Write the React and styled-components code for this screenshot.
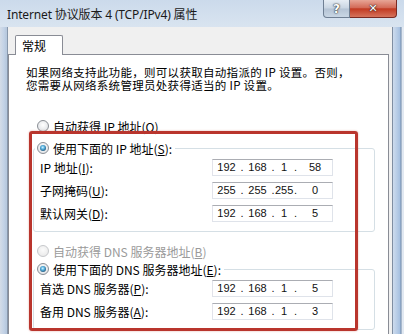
import styled, { createGlobalStyle } from "styled-components";

const GlobalStyle = createGlobalStyle`
  html, body {
    margin: 0;
    padding: 0;
    background: #d6e1ee;
  }
  body {
    font-family: "Noto Sans CJK SC", "Noto Sans", sans-serif;
    font-size: 12px;
    color: #000;
  }
`;

const Window = styled.div`
  position: relative;
  width: 404px;
  height: 334px;
  overflow: hidden;
  display: flex;
  flex-direction: column;
  background: linear-gradient(180deg, #cbdaeb 0, #d9e4f0 27px, #c9d8ea 100%);
`;

const TitleBar = styled.div`
  height: 27px;
  flex: none;
  display: flex;
  align-items: flex-start;
  padding-left: 7px;
`;

const Title = styled.div`
  flex: 1;
  padding-top: 6px;
  line-height: 18px;
  font-size: 12px;
  color: #1a1a1a;
  font-family: "Noto Sans", "Noto Sans CJK SC", sans-serif;
  letter-spacing: -0.15px;
`;

const Caption = styled.div`
  display: flex;
  margin-right: 7px;
`;

const CapButton = styled.div`
  height: 18px;
  box-sizing: border-box;
  display: grid;
  place-items: center;
  border: 1px solid ${(p) => (p.$close ? "#7a2a22" : "#6f7f93")};
  border-top: none;
  font-family: "DejaVu Sans", sans-serif;
  font-weight: bold;
  color: #fff;
  text-shadow: 0 0 2px #2a2a2a, 0 0 1px #000;
  width: ${(p) => (p.$close ? "47px" : "27px")};
  border-radius: ${(p) => (p.$close ? "0 0 4px 0" : "0 0 0 4px")};
  border-left: ${(p) => (p.$close ? "none" : undefined)};
  font-size: ${(p) => (p.$close ? "11px" : "12px")};
  background: ${(p) =>
    p.$close
      ? "linear-gradient(180deg, #e7a596 0, #d36b58 45%, #c23a22 52%, #d5735c 100%)"
      : "linear-gradient(180deg, #e6edf4 0, #c9d5e2 48%, #b4c3d4 52%, #c9d6e4 100%)"};
`;

const Middle = styled.div`
  flex: 1;
  display: flex;
  min-height: 0;
`;

const LeftFrame = styled.div`
  width: 7px;
  flex: none;
  background: linear-gradient(90deg, #d4dce7 0, #c2d2e6 4px, #b8c9de 6px);
  border-right: 1px solid #8797ab;
`;

const RightFrame = styled.div`
  width: 11px;
  flex: none;
  border-left: 1px solid #7f8ea2;
  background: linear-gradient(90deg, #cddbed 0, #b7cce6 4px, #a5bfe0 7px, #6f88a6 8px, #e2e9f2 9px);
`;

const Body = styled.div`
  flex: 1;
  display: flex;
  flex-direction: column;
  background: #f0f0f0;
  padding-right: 3px;
`;

const TabStrip = styled.div`
  height: 27px;
  flex: none;
  display: flex;
  align-items: flex-end;
  padding-left: 7px;
`;

const Tab = styled.div`
  position: relative;
  z-index: 1;
  width: 48px;
  height: 20px;
  box-sizing: border-box;
  margin-bottom: -1px;
  padding-left: 6px;
  line-height: 19px;
  font-size: 12px;
  background: #fff;
  border: 1px solid #898c95;
  border-bottom: none;
  border-radius: 2px 2px 0 0;
`;

const Panel = styled.div`
  flex: 1;
  background: #fff;
  border: 1px solid #898c95;
  border-bottom: none;
  padding: 11px 0 0 17px;
  display: flex;
  flex-direction: column;
  align-items: flex-start;
`;

const Desc = styled.p`
  margin: 0;
  line-height: 13px;
  font-size: 11.5px;
  letter-spacing: 0.3px;
  white-space: nowrap;
`;

const RadioRow = styled.div`
  display: flex;
  align-items: center;
  gap: 4px;
  height: 16px;
  margin-left: 11px;
  margin-top: ${(p) => p.$top}px;
  color: ${(p) => (p.$disabled ? "#9a9a9a" : "#000")};
  white-space: nowrap;
`;

const Radio = styled.span`
  width: 12px;
  height: 12px;
  box-sizing: border-box;
  flex: none;
  border-radius: 50%;
  border: 1px solid ${(p) => (p.$disabled ? "#c6c8cb" : "#8a8e95")};
  background: ${(p) =>
    p.$disabled
      ? "radial-gradient(circle at 50% 40%, #fbfbfb, #e6e6e6)"
      : "radial-gradient(circle at 50% 40%, #ffffff, #d9dce0)"};
  display: grid;
  place-items: center;

  &::after {
    content: "";
    display: ${(p) => (p.$checked ? "block" : "none")};
    width: 6px;
    height: 6px;
    border-radius: 50%;
    background: radial-gradient(circle at 45% 40%, #d8f3ff 0, #56b2e0 35%, #1f4f72 80%);
  }
`;

const Group = styled.fieldset`
  margin: ${(p) => p.$top}px 0 0 7px;
  width: 342px;
  box-sizing: border-box;
  padding: 3px 0 9px 6px;
  border: 1px solid #d5dfe5;
  border-radius: 3px;
  display: flex;
  flex-direction: column;
  gap: 6px;
  min-width: 0;
`;

const Legend = styled.legend`
  display: flex;
  align-items: center;
  gap: 4px;
  height: 16px;
  padding: 0 3px 0 2px;
  margin-left: -5px;
  white-space: nowrap;
`;

const Row = styled.div`
  display: flex;
  align-items: center;
  height: 17px;
`;

const Label = styled.span`
  width: 172px;
  flex: none;
  line-height: 17px;
  white-space: nowrap;
`;

const IpField = styled.div`
  width: 121px;
  height: 17px;
  box-sizing: border-box;
  border: 1px solid #dfe3ea;
  border-top-color: #abadb3;
  border-left-color: #e2e3ea;
  background: #fff;
  display: grid;
  grid-template-columns: 27px 4px 27px 4px 18px 5px 1fr;
  align-items: center;
  font-family: "Liberation Sans", Arial, sans-serif;
  font-size: 11px;
  line-height: 15px;
  color: #111;
`;

const Seg = styled.span`
  text-align: center;
`;

const RedMark = styled.div`
  position: absolute;
  left: 29px;
  top: 131px;
  width: 329px;
  height: 200px;
  box-sizing: border-box;
  border: 3px solid #b9352d;
  border-radius: 3px;
  box-shadow: 0 0 2px rgba(190, 50, 40, 0.45);
  pointer-events: none;
`;

function Ip({ value }) {
  const parts = value.split(".");
  return (
    <IpField>
      <Seg>{parts[0]}</Seg>
      <Seg>.</Seg>
      <Seg>{parts[1]}</Seg>
      <Seg>.</Seg>
      <Seg>{parts[2]}</Seg>
      <Seg>.</Seg>
      <Seg>{parts[3]}</Seg>
    </IpField>
  );
}

const ipRows = [
  { label: "IP 地址", key: "I", value: "192.168.1.58" },
  { label: "子网掩码", key: "U", value: "255.255.255.0" },
  { label: "默认网关", key: "D", value: "192.168.1.5" },
];

const dnsRows = [
  { label: "首选 DNS 服务器", key: "P", value: "192.168.1.5" },
  { label: "备用 DNS 服务器", key: "A", value: "192.168.1.3" },
];

function Field({ label, hotkey, value }) {
  return (
    <Row>
      <Label>
        {label}(<u>{hotkey}</u>):
      </Label>
      <Ip value={value} />
    </Row>
  );
}

export default function App() {
  return (
    <>
      <GlobalStyle />
      <Window>
        <TitleBar>
          <Title>Internet 协议版本 4 (TCP/IPv4) 属性</Title>
          <Caption>
            <CapButton>?</CapButton>
            <CapButton $close>✕</CapButton>
          </Caption>
        </TitleBar>
        <Middle>
          <LeftFrame />
          <Body>
            <TabStrip>
              <Tab>常规</Tab>
            </TabStrip>
            <Panel>
              <Desc>
                如果网络支持此功能，则可以获取自动指派的 IP 设置。否则，
                <br />
                您需要从网络系统管理员处获得适当的 IP 设置。
              </Desc>
              <RadioRow $top={26}>
                <Radio />
                <span>
                  自动获得 IP 地址(<u>O</u>)
                </span>
              </RadioRow>
              <Group $top={6}>
                <Legend>
                  <Radio $checked />
                  <span>
                    使用下面的 IP 地址(<u>S</u>):
                  </span>
                </Legend>
                {ipRows.map((r) => (
                  <Field key={r.key} label={r.label} hotkey={r.key} value={r.value} />
                ))}
              </Group>
              <RadioRow $top={11} $disabled>
                <Radio $disabled />
                <span>
                  自动获得 DNS 服务器地址(<u>B</u>)
                </span>
              </RadioRow>
              <Group $top={2}>
                <Legend>
                  <Radio $checked />
                  <span>
                    使用下面的 DNS 服务器地址(<u>E</u>):
                  </span>
                </Legend>
                {dnsRows.map((r) => (
                  <Field key={r.key} label={r.label} hotkey={r.key} value={r.value} />
                ))}
              </Group>
            </Panel>
          </Body>
          <RightFrame />
        </Middle>
        <RedMark />
      </Window>
    </>
  );
}
